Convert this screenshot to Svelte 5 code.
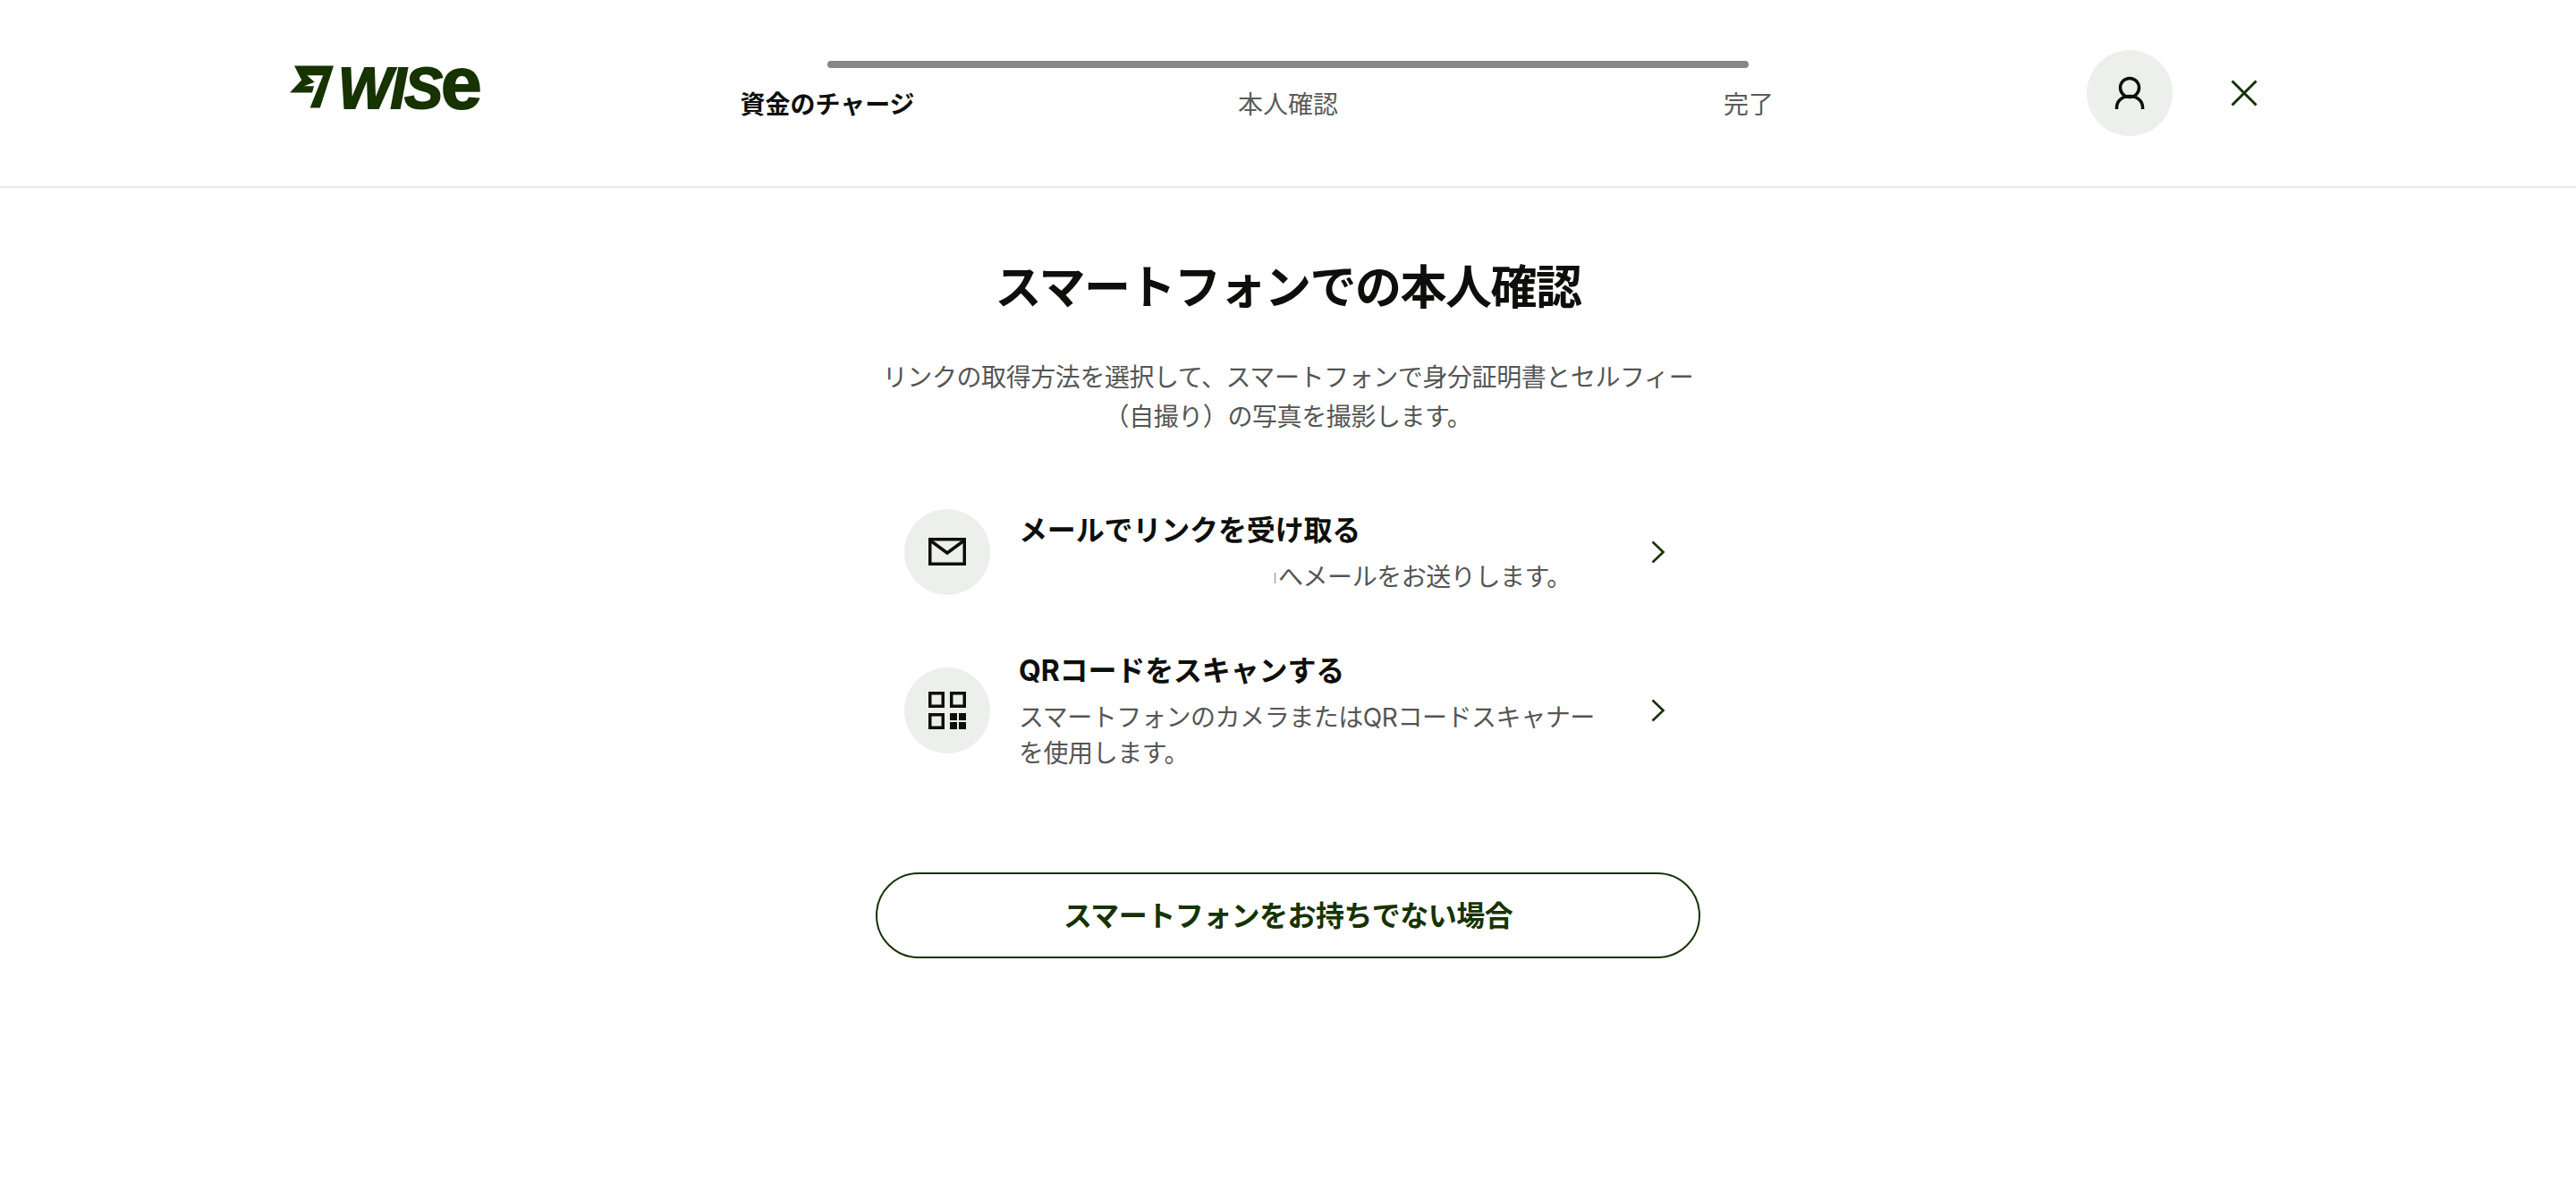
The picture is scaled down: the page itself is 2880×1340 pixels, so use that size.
<script>
    const steps = [
        { label: "資金のチャージ", active: true },
        { label: "本人確認", active: false },
        { label: "完了", active: false }
    ];
</script>

<header class="topbar">
    <div class="brand">
        <svg class="flag" viewBox="133 133 145 139" aria-hidden="true">
            <path d="M148 133H278L233 272H200L243 165H190L215 187 180 200H213L207 222H133L172 180Z" />
        </svg>
        <span class="wordmark">WIS<span class="wordmark-e">e</span></span>
    </div>

    <div class="stepper">
        <div class="track"></div>
        <div class="labels">
            {#each steps as step}
                <span class="label" class:active={step.active}>{step.label}</span>
            {/each}
        </div>
    </div>

    <div class="actions">
        <div class="round">
            <svg viewBox="0 0 96 96" width="96" height="96" aria-hidden="true">
                <circle cx="48" cy="42" r="10.5" class="line" />
                <path d="M33.5 66V64C33.5 57 39.5 51.5 48 51.5S62.5 57 62.5 64V66" class="line" />
            </svg>
        </div>
        <svg class="close" viewBox="0 0 32 32" width="32" height="32" aria-hidden="true">
            <path d="M2.5 2.5L29.5 29.5M29.5 2.5L2.5 29.5" />
        </svg>
    </div>
</header>

<main class="page">
    <h1>スマートフォンでの本人確認</h1>
    <p class="intro">リンクの取得方法を選択して、スマートフォンで身分証明書とセルフィー（自撮り）の写真を撮影します。</p>

    <div class="options">
        <div class="option">
            <div class="round">
                <svg viewBox="0 0 96 96" width="96" height="96" aria-hidden="true">
                    <rect x="28.75" y="33.75" width="38.5" height="27.5" class="line" />
                    <path d="M29 35L48 49 67 35" class="line" />
                </svg>
            </div>
            <div class="option-text">
                <div class="option-title">メールでリンクを受け取る</div>
                <div class="option-desc"><span class="hidden-mail"></span>へメールをお送りします。</div>
            </div>
            <svg class="chevron" viewBox="0 0 32 32" width="32" height="32" aria-hidden="true">
                <path d="M10.5 4.5L22.5 16 10.5 27.5" />
            </svg>
        </div>

        <div class="option">
            <div class="round">
                <svg viewBox="0 0 96 96" width="96" height="96" aria-hidden="true">
                    <rect x="28.75" y="28.75" width="14.5" height="14.5" class="line" />
                    <rect x="52.75" y="28.75" width="14.5" height="14.5" class="line" />
                    <rect x="28.75" y="52.75" width="14.5" height="14.5" class="line" />
                    <rect x="51" y="51" width="8" height="8" />
                    <rect x="61" y="51" width="8" height="8" />
                    <rect x="51" y="61" width="8" height="8" />
                    <rect x="61" y="61" width="8" height="8" />
                </svg>
            </div>
            <div class="option-text">
                <div class="option-title">QRコードをスキャンする</div>
                <div class="option-desc">スマートフォンのカメラまたはQRコードスキャナーを使用します。</div>
            </div>
            <svg class="chevron" viewBox="0 0 32 32" width="32" height="32" aria-hidden="true">
                <path d="M10.5 4.5L22.5 16 10.5 27.5" />
            </svg>
        </div>
    </div>

    <button class="secondary" type="button">スマートフォンをお持ちでない場合</button>
</main>

<style>
    :global(body) {
        background: #fff;
        color: #0e0f0c;
        font-family: Inter, "Noto Sans CJK JP", sans-serif;
    }

    .topbar {
        /* display */
        display: grid;
        grid-template-columns: 1fr 1030px 1fr;

        /* size */
        height: 208px;
        padding: 0 324px;
        border-bottom: 2px solid #e8e9e7;
    }

    .brand {
        display: flex;
        align-items: flex-start;
        gap: 5px;
        padding-top: 73px;
        color: #163300;
    }

    .flag {
        width: 49px;
        height: 48px;
        fill: #163300;
    }

    .wordmark {
        margin-top: -3px;
        font-family: "Liberation Sans", sans-serif;
        font-weight: 700;
        font-style: italic;
        font-size: 64px;
        line-height: 46px;
        letter-spacing: -2px;
        -webkit-text-stroke: 2px #163300;
    }

    .wordmark-e {
        font-style: normal;
        font-size: 82px;
        letter-spacing: 0;
        -webkit-text-stroke: 2px #163300;
    }

    .stepper {
        padding-top: 68px;
    }

    .track {
        height: 8px;
        border-radius: 4px;
        background: #868685;
    }

    .labels {
        display: flex;
        justify-content: space-between;
        margin: 21px -150px 0;
    }

    .label {
        width: 300px;
        text-align: center;
        font-size: 28px;
        line-height: 40px;
        color: #5a5c5a;
    }

    .label.active {
        font-weight: 700;
        color: #0e0f0c;
    }

    .actions {
        display: flex;
        justify-content: flex-end;
        align-items: flex-start;
        gap: 64px;
        padding: 56px 31px 0 0;
    }

    .close {
        margin-top: 32px;
    }

    .close path {
        fill: none;
        stroke: #163300;
        stroke-width: 3;
    }

    .round {
        flex: none;
        width: 96px;
        height: 96px;
        border-radius: 50%;
        background: #edefec;
    }

    .round svg {
        display: block;
        fill: #0e0f0c;
    }

    .round .line {
        fill: none;
        stroke: #0e0f0c;
        stroke-width: 3.5;
    }

    .page {
        display: flex;
        flex-direction: column;
        align-items: center;
        width: 922px;
        margin: 0 auto;
        padding-top: 82px;
    }

    h1 {
        margin: 0;
        font-size: 52px;
        line-height: 60px;
        font-weight: 700;
        letter-spacing: -1.5px;
    }

    .intro {
        margin: 48px 0 0;
        width: 910px;
        text-align: center;
        font-size: 28px;
        line-height: 44px;
        letter-spacing: -0.42px;
        color: #545654;
    }

    .options {
        display: flex;
        flex-direction: column;
        gap: 61px;
        align-self: stretch;
        margin-top: 81px;
        padding: 0 32px;
    }

    .option {
        display: flex;
        align-items: center;
        gap: 32px;
    }

    .option-text {
        flex: 1;
    }

    .option-title {
        font-size: 32px;
        line-height: 48px;
        font-weight: 700;
        letter-spacing: -0.15px;
    }

    .option-desc {
        margin-top: 8px;
        font-size: 28px;
        line-height: 40px;
        letter-spacing: -0.45px;
        color: #545654;
    }

    .hidden-mail {
        display: inline-block;
        width: 286px;
        height: 12px;
        margin-right: 3px;
        border-right: 1px solid #868685;
        vertical-align: 3px;
    }

    .chevron {
        flex: none;
    }

    .chevron path {
        fill: none;
        stroke: #163300;
        stroke-width: 2.6;
    }

    .secondary {
        width: 100%;
        height: 96px;
        margin-top: 113px;
        padding: 0 0 4px;
        border: 2px solid #163300;
        border-radius: 48px;
        background: transparent;
        color: #163300;
        font-family: inherit;
        font-size: 32px;
        font-weight: 700;
        letter-spacing: -0.55px;
    }
</style>
